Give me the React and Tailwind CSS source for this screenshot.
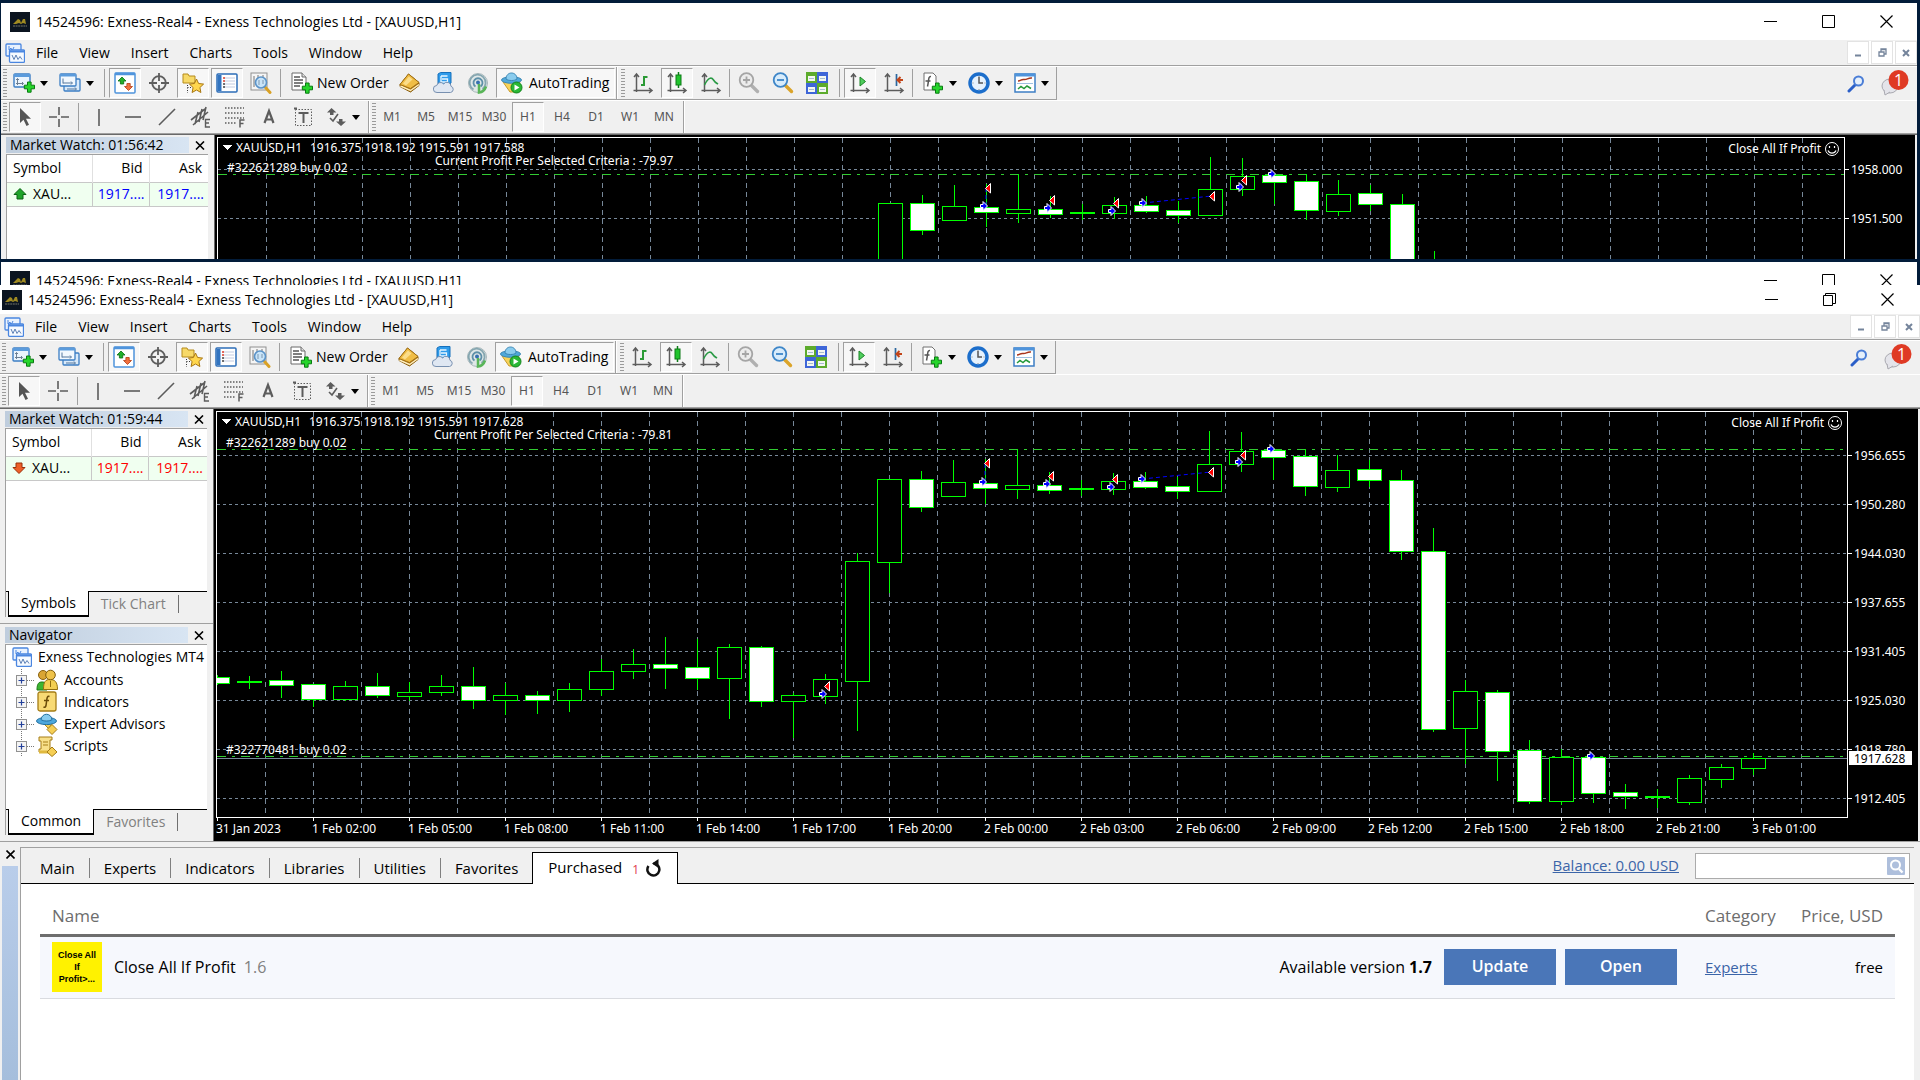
import React from "react";

const UI = "font-['Open_Sans','Noto_Sans',sans-serif]";

/* ---------- icon helpers ---------- */
function Ico({ children, size = 22 }) {
  return (
    <svg width={size} height={size} viewBox="0 0 22 22" className="shrink-0" fill="none" aria-hidden="true">
      {children}
    </svg>
  );
}
function Plus({ x = 12, y = 10 }) {
  return (
    <path
      transform={`translate(${x} ${y})`}
      d="M3.5 .5h3.600v3.200h3.400v3.600H7.100v3.400H3.5V7.300H.300V3.700h3.200z"
      fill="#25d52b"
      stroke="#087a10"
      strokeWidth="1"
    />
  );
}
const NewChartIcon = () => (
  <Ico>
    <rect x="1" y="2" width="16" height="13" rx="1" fill="#eaf4fd" stroke="#3b7dc4" strokeWidth="1.4" />
    <rect x="1" y="2" width="16" height="3" fill="#5b9bdc" />
    <path d="M4.500 13V6.500M3 8l1.500-1.500L6 8M3 11.500h7M9 10l1.500 1.500L9 13" stroke="#6c7f94" />
    <Plus x={11} y={9.500} />
  </Ico>
);
const ProfilesIcon = () => (
  <Ico>
    <rect x="5" y="7" width="16" height="12" rx="1" fill="#d9eafa" stroke="#3b7dc4" strokeWidth="1.300" />
    <rect x="1" y="2" width="16" height="12" rx="1" fill="#f2f8fe" stroke="#3b7dc4" strokeWidth="1.300" />
    <rect x="1" y="2" width="16" height="2.500" fill="#5b9bdc" />
    <path d="M4 6.500v5M4 11h9M12 9.500l1.500 1.500-1.500 1.500M8 17h9M16 15.500l1.500 1.500-1.500 1.500" stroke="#54779c" />
  </Ico>
);
const MarketWatchIcon = () => (
  <Ico>
    <rect x="1" y="1" width="20" height="20" rx="1" fill="#fff" stroke="#4f94dc" strokeWidth="1.500" />
    <path d="M1 2h20" stroke="#4f94dc" strokeWidth="2.500" />
    <path d="M8 5l4 4H9.700v3H6.400V9H4z" fill="#22b02b" stroke="#0b6e12" strokeWidth=".8" />
    <path d="M14.500 18.500l-4-4h2.400v-3h3.300v3h2.300z" fill="#f2703c" stroke="#b23a12" strokeWidth=".8" />
  </Ico>
);
const DataWindowIcon = () => (
  <Ico>
    <circle cx="11" cy="11" r="6.800" stroke="#5d5d5d" strokeWidth="1.800" />
    <path d="M11 1v8M11 13v8M1 11h8M13 11h8" stroke="#5d5d5d" strokeWidth="1.800" />
  </Ico>
);
const NavigatorIcon = () => (
  <Ico>
    <path d="M1 2h5l1 2h6v7H1z" fill="#f7d968" stroke="#b58b1d" />
    <path d="M5.500 13v8M5.500 15.500h5" stroke="#333" strokeDasharray="1 1.500" />
    <path d="M14.500 7l2.100 4.500 5 .6-3.700 3.400 1 5-4.400-2.500-4.400 2.500 1-5-3.700-3.400 5-.6z" fill="#ffd64d" stroke="#a87612" />
  </Ico>
);
const TerminalIcon = () => (
  <Ico>
    <rect x="1" y="2" width="20" height="18" rx="1" fill="#fff" stroke="#2d6db8" strokeWidth="1.500" />
    <path d="M3.500 3v16" stroke="#3274c0" strokeWidth="4" />
    <path d="M8 6h11M8 9h11M8 12h11M8 15h11" stroke="#c2cbe0" />
    <path d="M7 6h2M7 9h2" stroke="#e03e2b" strokeWidth="1.500" />
    <path d="M7 12h2M7 15h2" stroke="#444" strokeWidth="1.500" />
  </Ico>
);
const TesterIcon = () => (
  <Ico>
    <rect x="1" y="1" width="16" height="17" fill="#f5f5f5" stroke="#8f8f8f" />
    <path d="M4 4v11M8 3v4M13 3v3" stroke="#777" />
    <path d="M15.500 15.500l4.500 5" stroke="#d9a125" strokeWidth="3" strokeLinecap="round" />
    <circle cx="11" cy="10.500" r="5.500" fill="#c4e2f8" fillOpacity=".9" stroke="#5b93c8" strokeWidth="1.600" />
    <path d="M9 8v5M13 8v4" stroke="#7d97b0" />
  </Ico>
);
const OrderIcon = () => (
  <Ico>
    <path d="M1 1h10l4 4v13H1z" fill="#fff" stroke="#6b6b6b" />
    <path d="M11 1v4h4" fill="#ddd" stroke="#6b6b6b" />
    <path d="M3 5h6M3 8h9M3 11h9M3 14h6" stroke="#555" strokeWidth="1.300" />
    <Plus x={11} y={10.500} />
  </Ico>
);
const MetaEditorIcon = () => (
  <Ico>
    <path d="M1 12.500L9.500 2 20 10.500v3L11.500 20 1 14.500z" fill="#a9700f" stroke="#8a5c0c" />
    <path d="M1.500 14l10 4.500L20 12.500" stroke="#fff0c0" strokeWidth="1.500" />
    <path d="M1 12.500L9.500 2 20 10.500 11.500 16.500z" fill="#f0bd45" stroke="#9a6a10" strokeWidth=".8" />
    <path d="M4 11.500l6-7 3.500 3-6.500 6z" fill="#fbdd8a" />
  </Ico>
);
const CloudIcon = () => (
  <Ico>
    <path d="M5 2l2.500-1.500H18V11l-2.500 2H5z" fill="#2f9bea" stroke="#1670bc" />
    <path d="M8 4h6.500M8 4v6h6.500V7H9" stroke="#e8f6ff" strokeWidth="1.300" />
    <path d="M4 20.500a3.500 3.500 0 01-.3-7 4 4 0 017-1.500 4 4 0 017.300 2.300 3.200 3.200 0 01-.5 6.200z" fill="#dfe7f2" stroke="#7890b0" />
  </Ico>
);
const SignalIcon = () => (
  <Ico>
    <circle cx="11" cy="11" r="9.500" fill="#dfe7e7" stroke="#a9b8bb" />
    <path d="M6.500 17.500a8 8 0 119-.5" stroke="#85a6b0" strokeWidth="1.800" />
    <path d="M8.500 14.500a4.500 4.500 0 115 0" stroke="#5d8fa8" strokeWidth="1.800" />
    <circle cx="11" cy="10.500" r="2" fill="#3570b0" />
    <path d="M12 12v8.500c4-.5 6-3 7-6" stroke="#59b558" strokeWidth="2.500" />
  </Ico>
);
const AutoIcon = () => (
  <Ico>
    <path d="M2 10h17l-5 10H9z" fill="#f7d35a" stroke="#c79a2c" />
    <ellipse cx="10.500" cy="8" rx="10" ry="3.300" fill="#4fa8da" stroke="#3a86b4" />
    <path d="M5 7c0-8 11-8 11 0-2 2-9 2-11 0z" fill="#8accee" stroke="#3a86b4" />
    <circle cx="15.500" cy="15.500" r="5.500" fill="#2ab835" stroke="#13841c" />
    <path d="M13.500 12.500l5 3-5 3z" fill="#fff" />
  </Ico>
);
const Axes = () => (
  <path d="M4.500 20V2M2 5l2.500-3L7 5M1.500 18.500H20M17 16l3 2.500L17 21" stroke="#5c5c5c" strokeWidth="1.500" />
);
const BarsIcon = () => (
  <Ico><Axes /><path d="M12 4v10M12 5h3.500M12 13H9" stroke="#2a9a35" strokeWidth="2" /></Ico>
);
const CandlesIcon = () => (
  <Ico><Axes /><path d="M12.500 0v16" stroke="#0c7a17" strokeWidth="1.500" /><rect x="10" y="3" width="5" height="10" fill="#20c42c" stroke="#0c7a17" /></Ico>
);
const LineIcon = () => (
  <Ico><Axes /><path d="M4.500 13c4-8 7-8 9-5 1.500 2.500 3 3 4.500 4" stroke="#2a9a45" strokeWidth="1.600" /></Ico>
);
function Lens({ minus, c1, c2, handle }) {
  return (
    <Ico>
      <path d="M13.500 13.500l6 6" stroke={handle} strokeWidth="3.400" strokeLinecap="round" />
      <circle cx="8.500" cy="8" r="6.800" fill={c2} stroke={c1} strokeWidth="1.800" />
      <path d={minus ? "M5 8h7" : "M5 8h7M8.500 4.500v7"} stroke={c1} strokeWidth="1.800" />
    </Ico>
  );
}
const TileIcon = () => (
  <Ico>
    <path d="M0 0h11v11H0z" fill="#5cab2c" /><path d="M11 0h11v11H11z" fill="#3e66d8" />
    <path d="M0 11h11v11H0z" fill="#3e66d8" /><path d="M11 11h11v11H11z" fill="#5cab2c" />
    <path d="M2 4h7v5H2zM13 4h7v5h-7zM2 15h7v5H2zM13 15h7v5h-7z" fill="#f4f8f2" />
    <path d="M3 6.500h5M14 6.500h5M3 17.500h5M14 17.500h5" stroke="#a8bdd0" />
  </Ico>
);
const ScrollIcon = () => (
  <Ico><Axes /><path d="M11 5l5.500 4.500L11 14z" fill="#4fce5c" stroke="#1a8426" /></Ico>
);
const ShiftIcon = () => (
  <Ico><Axes /><path d="M13.500 2v12" stroke="#2c679f" strokeWidth="1.700" /><path d="M20 8h-5M17.500 5l-3 3 3 3" stroke="#c24418" strokeWidth="2" /></Ico>
);
const IndicatorsIcon = () => (
  <Ico>
    <path d="M2 1h9l3 3v14H2z" fill="#fff" stroke="#707070" />
    <path d="M9 4.500c-3-.5-2 4-3.500 10M3.500 9h5" stroke="#555" strokeWidth="1.500" />
    <Plus x={10} y={10.500} />
  </Ico>
);
const ClockIcon = () => (
  <Ico>
    <circle cx="11" cy="11" r="9" fill="#e6f2fd" stroke="#1c6ecb" strokeWidth="3.500" />
    <path d="M11 5v6h4" stroke="#555" strokeWidth="1.500" />
    <path d="M11 4v1M11 17v1M4.500 11h1M16.500 11h1" stroke="#888" />
  </Ico>
);
const TemplateIcon = () => (
  <Ico>
    <rect x="1" y="2" width="20" height="18" fill="#fff" stroke="#3d7ec4" strokeWidth="1.500" />
    <path d="M1 3h20" stroke="#4f94dc" strokeWidth="3" />
    <path d="M3 11.500h16" stroke="#9fc0e0" />
    <path d="M4 9c3 0 3-2 6-1.500s4-2 8-1.500" stroke="#a8351c" strokeWidth="1.500" />
    <path d="M4 17l3-2.500 3 2 3-2.500 4 2.500" stroke="#259a3a" strokeWidth="1.500" />
  </Ico>
);
const G = "#5c5c5c";
const CursorIcon = () => (
  <Ico><path d="M6 2v15l3.500-3.200 3 6.200 2.500-1.200-3-6h5z" fill="#555" /></Ico>
);
const CrossIcon = () => (
  <Ico><path d="M11 1v8M11 13v8M1 11h8M13 11h8" stroke={G} strokeWidth="1.600" /></Ico>
);
const VIcon = () => <Ico><path d="M11 3v17" stroke={G} strokeWidth="1.600" /></Ico>;
const HIcon = () => <Ico><path d="M3 11h16" stroke={G} strokeWidth="1.600" /></Ico>;
const DIcon = () => <Ico><path d="M3 19L19 3" stroke={G} strokeWidth="1.600" /></Ico>;
const ChannelIcon = () => (
  <Ico>
    <path d="M1 14L15 3M3 19L18 6M8 6L5 18M12 3L9 16M16 1l-3 13" stroke={G} strokeWidth="1.600" />
    <path d="M20 13.500h-4.500v7.500H20M15.500 17H19" stroke={G} strokeWidth="1.400" />
  </Ico>
);
const FiboIcon = () => (
  <Ico>
    <path d="M1 2h19M1 7h19M1 12h19M1 17h12" stroke={G} strokeWidth="1.300" strokeDasharray="1.500 1.500" />
    <path d="M20.500 14H16v7.500M16 17.500h3.500" stroke={G} strokeWidth="1.500" />
  </Ico>
);
const LetterA = () => (
  <Ico><path d="M6.500 17L11 5l4.500 12M8 13.500h6" stroke={G} strokeWidth="2.200" /></Ico>
);
const LabelIcon = () => (
  <Ico>
    <rect x="3.500" y="3.500" width="16" height="16" stroke={G} strokeDasharray="1.500 1.500" />
    <path d="M6.500 7h10M11.500 7v10M2 2.500h3" stroke={G} strokeWidth="2" />
  </Ico>
);
const ShapesIcon = () => (
  <Ico>
    <path d="M6.500 2l5 4.500h-3v2.500H5V6.500H2z" fill={G} />
    <path d="M16 20l-5-4.500h3V13h3.500v2.500H21z" fill={G} />
    <path d="M5 12l3 3 5-7" stroke={G} strokeWidth="1.600" />
  </Ico>
);
const Caret = () => (
  <svg width="8" height="5" viewBox="0 0 8 5" aria-hidden="true"><path d="M0 0h8L4 5z" fill="#000" /></svg>
);

function AppLogo() {
  return (
    <svg width="20" height="20" viewBox="0 0 20 20" className="shrink-0" aria-hidden="true">
      <rect width="20" height="20" fill="#0b1420" />
      <path d="M3 12l5-5 2 1 1 3 2-4h2l1 5-3-1-2 1-2-1-3 1z" fill="#a08a22" />
      <path d="M3 14h14" stroke="#77776a" strokeDasharray="2 .6" />
    </svg>
  );
}
function Mt4Icon({ size = 20 }) {
  return (
    <svg width={size} height={size} viewBox="0 0 20 20" className="shrink-0" fill="none" aria-hidden="true">
      <rect x="1" y="1" width="15" height="12" rx="1" fill="#e9f2fe" stroke="#4a86e0" strokeWidth="1.300" />
      <path d="M4 3v4l2-2 1 3 2-4" stroke="#4a86e0" />
      <rect x="4.500" y="7" width="15" height="12.300" rx="1" fill="#f6faff" stroke="#4a86e0" strokeWidth="1.300" />
      <path d="M4.500 8.500h15" stroke="#4a86e0" strokeWidth="2" />
      <path d="M7 12l2 4.500 2-4.500 2 4.500 2-3 2 3" stroke="#5c7fb4" />
    </svg>
  );
}

/* ---------- toolbar parts ---------- */
const pressedCls =
  "border-l border-t border-l-[#a0a0a0] border-t-[#a0a0a0] border-r border-b border-r-white border-b-white bg-[#f7f7f7]";

function Tool({ label, on, children }) {
  return (
    <button
      type="button"
      aria-label={label}
      className={"mr-0.5 flex h-[30px] w-8 items-center justify-center " + (on ? pressedCls : "")}
    >
      {children}
    </button>
  );
}
function DropTool({ label, children }) {
  return (
    <button type="button" aria-label={label} className="flex h-[30px] w-[46px] items-center gap-[5px] pl-1">
      {children}
      <Caret />
    </button>
  );
}
const Grip = ({ cls = "mx-0.5" }) => (
  <span className={"h-7 w-1 bg-[repeating-linear-gradient(180deg,#9a9a9a_0_1px,transparent_1px_3px)] " + cls} />
);
const Sep = ({ cls }) => <span className={"h-7 w-px bg-[#a0a0a0] " + cls} />;
const EndLine = () => <span className="mx-px h-8 w-0.5 border-r border-l border-l-[#a0a0a0] border-r-white" />;

function ToolbarMain() {
  return (
    <div className="flex">
      <div className="flex h-[33px] shrink-0 items-center border-r border-b border-[#a0a0a0]">
        <Grip />
        <DropTool label="New chart"><NewChartIcon /></DropTool>
        <DropTool label="Profiles"><ProfilesIcon /></DropTool>
        <Sep cls="ml-[3px] mr-1" />
        <Tool label="Market Watch" on><MarketWatchIcon /></Tool>
        <Tool label="Data Window"><DataWindowIcon /></Tool>
        <Tool label="Navigator" on><NavigatorIcon /></Tool>
        <Tool label="Terminal" on><TerminalIcon /></Tool>
        <Tool label="Strategy Tester"><TesterIcon /></Tool>
        <Sep cls="ml-px mr-1.5" />
        <button type="button" className="mr-[3px] flex h-[30px] w-[104px] items-center gap-1 pl-1 text-sm whitespace-nowrap">
          <OrderIcon />New Order
        </button>
        <Tool label="MetaEditor"><MetaEditorIcon /></Tool>
        <Tool label="Cloud"><CloudIcon /></Tool>
        <Tool label="Signals"><SignalIcon /></Tool>
        <button type="button" className={"flex h-[30px] w-[119px] items-center gap-1.5 pl-1 text-sm whitespace-nowrap " + pressedCls}>
          <AutoIcon />AutoTrading
        </button>
        <EndLine />
        <Grip />
        <Tool label="Bar chart"><BarsIcon /></Tool>
        <Tool label="Candlesticks" on><CandlesIcon /></Tool>
        <Tool label="Line chart"><LineIcon /></Tool>
        <Sep cls="mr-[3px]" />
        <Tool label="Zoom in"><Lens c1="#a5a5a5" c2="#ececec" handle="#b0b0b0" /></Tool>
        <Tool label="Zoom out"><Lens minus c1="#3e86c8" c2="#d8ecfb" handle="#dba42a" /></Tool>
        <Tool label="Tile windows"><TileIcon /></Tool>
        <Sep cls="mx-1" />
        <Tool label="Auto scroll" on><ScrollIcon /></Tool>
        <Tool label="Chart shift"><ShiftIcon /></Tool>
        <Sep cls="mr-[5px]" />
        <DropTool label="Indicators"><IndicatorsIcon /></DropTool>
        <DropTool label="Periods"><ClockIcon /></DropTool>
        <DropTool label="Templates"><TemplateIcon /></DropTool>
      </div>
      <div className="flex h-[33px] flex-1 items-start justify-end gap-4 pt-0.5 pr-2">
        <button type="button" aria-label="Search" className="mt-1.5">
          <svg width="18" height="18" viewBox="0 0 18 18" fill="none">
            <path d="M8 10l-6 6" stroke="#2b5fc8" strokeWidth="3" strokeLinecap="round" />
            <circle cx="11.500" cy="6" r="4.500" fill="#e6f0fb" stroke="#4a7dd6" strokeWidth="2" />
          </svg>
        </button>
        <button type="button" aria-label="1 new message" className="relative h-7 w-7">
          <svg width="28" height="28" viewBox="0 0 28 28" fill="none" className="absolute inset-0">
            <ellipse cx="9" cy="17" rx="8" ry="7" fill="#e4e4ea" stroke="#a9a9b0" />
            <path d="M3 21l1 5 5-3" fill="#e4e4ea" stroke="#a9a9b0" />
            <circle cx="17.500" cy="11" r="10" fill="#df3a24" />
          </svg>
          <span className="absolute top-px right-0 w-[21px] text-center text-base leading-5 text-white">1</span>
        </button>
      </div>
    </div>
  );
}

function ToolbarLines() {
  return (
    <div className="flex h-[33px] items-center border-t border-white">
      <Grip />
      <Tool label="Cursor" on><CursorIcon /></Tool>
      <Tool label="Crosshair"><CrossIcon /></Tool>
      <Sep cls="ml-px mr-1" />
      <Tool label="Vertical line"><VIcon /></Tool>
      <Tool label="Horizontal line"><HIcon /></Tool>
      <Tool label="Trendline"><DIcon /></Tool>
      <Tool label="Equidistant channel"><ChannelIcon /></Tool>
      <Tool label="Fibonacci retracement"><FiboIcon /></Tool>
      <Tool label="Text"><LetterA /></Tool>
      <Tool label="Text label"><LabelIcon /></Tool>
      <DropTool label="Arrows"><ShapesIcon /></DropTool>
      <EndLine />
      <Grip cls="ml-px" />
      {["M1", "M5", "M15", "M30", "H1", "H4", "D1", "W1", "MN"].map((t) => (
        <button
          key={t}
          type="button"
          className={
            "mr-0.5 flex h-[30px] w-8 items-center justify-center font-['Noto_Sans',sans-serif] text-xs text-[#555] " +
            (t === "H1" ? pressedCls : "")
          }
        >
          {t}
        </button>
      ))}
      <EndLine />
    </div>
  );
}

/* ---------- window chrome ---------- */
function TitleBar({ restored, cls }) {
  const btn = "flex h-7 w-[58px] items-center justify-center";
  return (
    <div className={"flex items-center bg-white " + cls}>
      <AppLogo />
      <h1 className="ml-1.5 flex-1 text-sm leading-6 whitespace-nowrap">
        14524596: Exness-Real4 - Exness Technologies Ltd - [XAUUSD,H1]
      </h1>
      <button type="button" aria-label="Minimize" className={btn}>
        <svg width="13" height="13"><path d="M0 6.500h13" stroke="#000" strokeWidth="1" /></svg>
      </button>
      <button type="button" aria-label="Maximize" className={btn}>
        <svg width="13" height="13" fill="none" stroke="#000">
          {restored ? <path d="M.5 2.500h9v10h-9zM2.500 2.500v-2h10v10h-3" /> : <path d="M.5.500h12v12H.5z" />}
        </svg>
      </button>
      <button type="button" aria-label="Close" className={btn}>
        <svg width="13" height="13" stroke="#000" strokeWidth="1.200"><path d="M.5.500l12 12M12.500.500l-12 12" /></svg>
      </button>
    </div>
  );
}

function MenuBar() {
  const mdi = "flex h-[23px] w-[22px] items-center justify-center border border-[#e3e3e3] bg-white";
  return (
    <div className="flex h-[26px] items-center border-b border-[#a0a0a0]">
      <nav className="flex items-center gap-px pl-1">
        <Mt4Icon />
        {["File", "View", "Insert", "Charts", "Tools", "Window", "Help"].map((m) => (
          <button key={m} type="button" className="px-[10px] text-sm leading-6">{m}</button>
        ))}
      </nav>
      <div className="ml-auto flex gap-0.5 bg-white">
        <button type="button" aria-label="Minimize chart" className={mdi}>
          <svg width="8" height="8"><path d="M1 6.500h6" stroke="#74849b" strokeWidth="2" /></svg>
        </button>
        <button type="button" aria-label="Restore chart" className={mdi}>
          <svg width="9" height="9" fill="none" stroke="#74849b" strokeWidth="1.300"><path d="M1 4h5v4H1zM3 3.500V1h5v5H6.500M3 1.500h5" /></svg>
        </button>
        <button type="button" aria-label="Close chart" className={mdi}>
          <svg width="8" height="8" stroke="#74849b" strokeWidth="2"><path d="M1 1l6 6M7 1L1 7" /></svg>
        </button>
      </div>
    </div>
  );
}

function WindowTop() {
  return (
    <div className="bg-[#f0f0f0]">
      <MenuBar />
      <div className="border-t border-white"><ToolbarMain /></div>
      <ToolbarLines />
      <div className="h-0.5 border-t border-[#a0a0a0] bg-[#696969]" />
    </div>
  );
}

/* ---------- side panels ---------- */
function PanelHead({ title }) {
  return (
    <div className="flex h-4 items-center">
      <h2 className="h-4 w-[183px] bg-linear-to-r from-[#bfcddd] to-[#d8e5f3] pl-1 text-sm leading-4 whitespace-nowrap">{title}</h2>
      <button type="button" aria-label={"Close " + title} className="ml-[5px] p-px">
        <svg width="10" height="9" stroke="#000" strokeWidth="1.600"><path d="M1 .5l8 8M9 .5l-8 8" /></svg>
      </button>
    </div>
  );
}

function PanelTabs({ active, other }) {
  return (
    <div className="flex h-[26px] shrink-0 bg-[#f0f0f0] text-sm text-[#808080]">
      <span className="w-0.5 border-t border-black" />
      <button type="button" className="border-x border-b-2 border-black bg-white px-3 leading-6 text-black">{active}</button>
      <div className="flex flex-1 items-center border-t border-black pb-0.5">
        <button type="button" className="px-3 leading-6 whitespace-nowrap">{other}</button>
        <span className="h-[18px] w-px bg-[#707070]" />
      </div>
    </div>
  );
}

function MarketWatch({ time, up }) {
  const tone = up ? "text-[#0000ff]" : "text-[#ff0000]";
  return (
    <>
      <PanelHead title={"Market Watch: " + time} />
      <div className="mt-px flex w-[202px] flex-1 flex-col overflow-hidden border-t border-l border-[#a0a0a0] bg-white">
        <table className="w-full table-fixed border-collapse text-sm">
          <thead>
            <tr className="h-[27px] border-b border-[#c8c8c8]">
              <th className="w-[85px] border-r border-[#e0e0e0] pl-1.5 text-left font-normal">Symbol</th>
              <th className="w-[57px] border-r border-[#e0e0e0] pr-1.5 text-right font-normal">Bid</th>
              <th className="pr-1.5 text-right font-normal">Ask</th>
            </tr>
          </thead>
          <tbody>
            <tr className="h-6 border-b border-[#c8c8c8] bg-[#f0fff0]">
              <td className="border-r border-[#c8c8c8] pl-1.5">
                <span className="flex items-center gap-1.5 leading-5">
                  <svg width="14" height="12" viewBox="0 0 14 12" aria-hidden="true">
                    {up ? (
                      <path d="M7 .5l6 6h-3V11H4V6.500H1z" fill="#1fa42a" stroke="#0b6212" />
                    ) : (
                      <path d="M7 11.500l6-6h-3V1H4v4.500H1z" fill="#ee5f28" stroke="#9a300b" />
                    )}
                  </svg>
                  XAU...
                </span>
              </td>
              <td className={"border-r border-[#c8c8c8] pr-1 text-right leading-5 " + tone}>1917....</td>
              <td className={"pr-1 text-right leading-5 " + tone}>1917....</td>
            </tr>
          </tbody>
        </table>
      </div>
    </>
  );
}

const AccountsIcon = () => (
  <Ico>
    <path d="M1 21c0-7 2-8 5-8s5 1 5 8z" fill="#3cb531" stroke="#1d7a16" />
    <circle cx="7" cy="6" r="4.500" fill="#d9a534" stroke="#8a6210" />
    <path d="M7.500 20.500c0-8 2-10 6.500-10s7.500 2 7.500 10z" fill="#f3cf52" stroke="#93700f" />
    <circle cx="14.500" cy="6" r="4.800" fill="#eec24a" stroke="#7d5a0c" />
    <path d="M14.500 12v6" stroke="#93700f" />
  </Ico>
);
const FxIcon = () => (
  <Ico>
    <rect x="2" y="1" width="18" height="19" rx="2" fill="#f8da74" stroke="#a57d16" strokeWidth="1.300" />
    <path d="M13.500 5.500c-3-1-2.500 3-3.500 9-.3 1.500-1 2-2.500 1.500M8 9.500h5" stroke="#6b4c08" strokeWidth="1.500" />
  </Ico>
);
const ExpertIcon = () => (
  <Ico>
    <path d="M6 9l10 1-3 6z" fill="#f2cf5b" stroke="#b78a1c" />
    <ellipse cx="10.500" cy="8" rx="10" ry="3.600" fill="#4da7dc" stroke="#22709f" />
    <path d="M5 6.500c1-7 10-7 11 0-2 2-9 2-11 0z" fill="#86cbef" stroke="#22709f" />
    <path d="M16 11.500l5 5-5 5-5-5z" fill="#f6cf55" stroke="#a57d16" />
  </Ico>
);
const ScriptIcon = () => (
  <Ico>
    <path d="M3 2h13v3h-2v12H3v-3h2V6H3z" fill="#f8e08a" stroke="#a57d16" />
    <path d="M7 7h5M7 10h5" stroke="#a57d16" />
    <path d="M3 17h13" stroke="#e0b93e" strokeWidth="3" />
    <path d="M16 12l5 5-5 4.500-5-4.500z" fill="#f6cf55" stroke="#a57d16" />
  </Ico>
);

function Navigator() {
  const rows = [
    ["Accounts", AccountsIcon],
    ["Indicators", FxIcon],
    ["Expert Advisors", ExpertIcon],
    ["Scripts", ScriptIcon],
  ];
  return (
    <>
      <PanelHead title="Navigator" />
      <div className="mt-px flex w-[202px] flex-1 flex-col border-t border-l border-[#a0a0a0] bg-white text-sm">
        <div className="flex h-[24px] items-center gap-1.5 pl-1.5 whitespace-nowrap">
          <Mt4Icon />
          <span>Exness Technologies MT4</span>
        </div>
        <ul>
          {rows.map(([name, Icon]) => (
            <li key={name} className="flex h-[22px] items-center pl-[10px]">
              <button type="button" aria-label={"Expand " + name} className="flex">
                <svg width="11" height="22" viewBox="0 0 11 22" fill="none">
                  <path d="M5.500 0v22" stroke="#777" strokeDasharray="1 1" />
                  <rect x=".5" y="6.500" width="10" height="10" fill="#f4f4f4" stroke="#919191" />
                  <path d="M5.500 8.500v6M2.500 11.500h6" stroke="#23409a" strokeWidth="1.200" />
                </svg>
              </button>
              <span className="mr-0.5 w-[7px] border-t border-dotted border-[#777]" />
              <Icon />
              <span className="ml-1.5 leading-5">{name}</span>
            </li>
          ))}
        </ul>
        <div className="mt-auto"><PanelTabs active="Common" other="Favorites" /></div>
      </div>
    </>
  );
}

/* ---------- chart ---------- */
/* [filled, bodyTop, bodyBottom, wickTop, wickBottom], one candle each 32px */
const CANDLES = [
  [1, 677, 683, 675, 684], [1, 681, 682, 676, 688], [1, 680, 685, 671, 697], [1, 684, 699, 684, 706],
  [0, 686, 699, 681, 700], [1, 686, 695, 673, 697], [0, 692, 696, 682, 700], [0, 686, 692, 675, 695],
  [1, 686, 700, 667, 708], [0, 695, 700, 683, 714], [1, 695, 700, 691, 713], [0, 689, 700, 683, 711],
  [0, 671, 689, 659, 695], [0, 664, 671, 649, 678], [1, 664, 668, 637, 688], [1, 667, 678, 639, 689],
  [0, 647, 678, 644, 718], [1, 647, 701, 646, 706], [0, 695, 701, 693, 737], [0, 679, 696, 674, 703],
  [0, 561, 681, 553, 730], [0, 479, 562, 479, 592], [1, 479, 507, 471, 511], [0, 482, 496, 460, 496],
  [1, 483, 488, 459, 503], [0, 485, 489, 449, 498], [1, 485, 490, 472, 493], [1, 488, 489, 480, 495],
  [0, 481, 489, 473, 494], [1, 481, 487, 472, 488], [1, 486, 491, 477, 498], [0, 464, 491, 431, 491],
  [0, 451, 464, 432, 471], [1, 450, 457, 449, 479], [1, 456, 486, 449, 495], [0, 470, 487, 455, 491],
  [1, 469, 480, 460, 486], [1, 480, 551, 470, 559], [1, 551, 729, 528, 731], [0, 691, 728, 680, 763],
  [1, 692, 751, 690, 780], [1, 750, 801, 740, 803], [0, 757, 801, 749, 804], [1, 757, 793, 757, 802],
  [1, 792, 796, 784, 808], [1, 796, 797, 789, 807], [0, 778, 802, 775, 804], [0, 767, 779, 764, 787],
  [0, 758, 768, 753, 774],
];
const BUYS = [[606, 694], [766, 482], [830, 484], [894, 487], [925, 479], [1022, 462], [1054, 449], [1374, 756]];
const SELLS = [[610, 686], [770, 463], [834, 476], [898, 479], [994, 472], [1026, 455]];
const TRADES = [[606, 694, 610, 686], [768, 482, 768, 463], [830, 484, 834, 476], [894, 487, 898, 479], [925, 479, 994, 472], [1022, 462, 1026, 455]];
const TIMES = [
  "31 Jan 2023", "1 Feb 02:00", "1 Feb 05:00", "1 Feb 08:00", "1 Feb 11:00", "1 Feb 14:00", "1 Feb 17:00", "1 Feb 20:00",
  "2 Feb 00:00", "2 Feb 03:00", "2 Feb 06:00", "2 Feb 09:00", "2 Feb 12:00", "2 Feb 15:00", "2 Feb 18:00", "2 Feb 21:00", "3 Feb 01:00",
];
const chartText = "font-['Noto_Sans',sans-serif] text-xs";

function Chart({ scale, orderY, gridY, prices, current, last, profit, secondOrder, full }) {
  const y = (v) => Math.round(orderY + (v - 449) * scale);
  const cols = Array.from({ length: 34 }, (_, i) => 48 * (i + 1));
  return (
    <div className="flex min-w-0 flex-1 flex-col overflow-hidden bg-black pt-0.5 pl-0.5">
      <div className="flex min-h-0 flex-1">
        <div className={"min-w-0 flex-1 border-t border-r border-l border-white " + (full ? "border-b" : "")}>
          <svg className="block h-full w-full" shapeRendering="crispEdges" role="img" aria-label="XAUUSD hourly candlestick chart">
            <g stroke="#778899" strokeWidth="1">
              {cols.map((x) => (
                <line key={x} x1={x + 0.5} x2={x + 0.5} y1="0" y2="100%" strokeDasharray="5 4" />
              ))}
              {gridY.map((g) => (
                <line key={g} x1="0" x2="100%" y1={g + 0.5} y2={g + 0.5} strokeDasharray="3 3" />
              ))}
              {current ? <line x1="0" x2="100%" y1={current + 0.5} y2={current + 0.5} /> : null}
            </g>
            <g stroke="#32cd32" strokeDasharray="9 6 3 6">
              <line x1="0" x2="100%" y1={orderY + 0.5} y2={orderY + 0.5} />
              {secondOrder ? <line x1="0" x2="100%" y1={secondOrder + 0.5} y2={secondOrder + 0.5} /> : null}
            </g>
            <g stroke="#00ff00" strokeWidth="1">
              {CANDLES.map(([filled, bt, bb, wt, wb], i) => {
                const x = i * 32;
                return (
                  <g key={i}>
                    <line x1={x + 0.5} x2={x + 0.5} y1={y(wt)} y2={y(wb) + 1} />
                    <rect x={x - 11.5} y={y(bt) + 0.5} width="24" height={Math.max(1, y(bb) - y(bt))} fill={filled ? "#fff" : "#000"} />
                  </g>
                );
              })}
            </g>
            <g stroke="#0000ff" strokeDasharray="4 3" shapeRendering="auto">
              {TRADES.map(([a, b, c, d]) => (
                <line key={a} x1={a} y1={y(b)} x2={c} y2={y(d)} />
              ))}
            </g>
            <g shapeRendering="auto">
              {BUYS.map(([a, b]) => (
                <path key={a} transform={`translate(${a} ${y(b)})`} d="M-3.500-1.500h2.500v-3l4.500 4.500-4.500 4.500v-3h-2.500z" fill="#0000ff" stroke="#fff" />
              ))}
              {SELLS.map(([a, b]) => (
                <path key={a} transform={`translate(${a} ${y(b)})`} d="M-2.500.500L2.500-4.500v9.500z" fill="#ff0000" stroke="#fff" />
              ))}
            </g>
            <g className={chartText} fill="#fff">
              <path d="M4 7h10l-5 5z" />
              <text x="18" y="14">XAUUSD,H1</text>
              <text x="92" y="14">{"1916.375 1918.192 1915.591 " + last}</text>
              <text x="217" y="27">{"Current Profit Per Selected Criteria : " + profit}</text>
              <text x="9" y={orderY - 2}>#322621289 buy 0.02</text>
              {secondOrder ? <text x="9" y={secondOrder - 2}>#322770481 buy 0.02</text> : null}
            </g>
            <svg x="100%" overflow="visible" shapeRendering="auto">
              <text x="-23" y="15" textAnchor="end" fill="#fff" className={chartText}>Close All If Profit</text>
              <circle cx="-12" cy="11" r="6.500" fill="none" stroke="#fff" />
              <path d="M-14.500 8v2M-9.500 8v2M-16 12.500c1.500 3.500 6.500 3.500 8 0" fill="none" stroke="#fff" strokeWidth="1.200" />
            </svg>
          </svg>
        </div>
        <svg className="block h-full w-[70px] shrink-0" fill="#fff">
          {prices.map(([v, py]) => (
            <g key={v}>
              <path d={`M0 ${py + 1.500}h4`} stroke="#fff" />
              <text x="6" y={py + 6} className={chartText}>{v}</text>
            </g>
          ))}
          {current ? (
            <g>
              <rect x="1" y={current - 6} width="63" height="14" />
              <text x="6" y={current + 6} fill="#000" className={chartText}>{last}</text>
            </g>
          ) : null}
        </svg>
      </div>
      {full ? (
        <svg className="block h-[23px] w-full shrink-0">
          {TIMES.map((t, i) => (
            <g key={t}>
              <path d={`M${i * 96 + 1.500} 0v3`} stroke="#fff" />
              <text x={i * 96} y="15" fill="#fff" className={chartText}>{t}</text>
            </g>
          ))}
        </svg>
      ) : null}
    </div>
  );
}

/* ---------- market terminal ---------- */
function Market() {
  const tabs = ["Main", "Experts", "Indicators", "Libraries", "Utilities", "Favorites"];
  const action = "h-9 w-28 bg-[#4a76b8] pb-0.5 text-base font-semibold text-white";
  return (
    <section className="flex flex-1 border-t border-[#a0a0a0] bg-[#f0f0f0] pr-1.5">
      <div className="flex w-5 shrink-0 flex-col items-center pt-2">
        <button type="button" aria-label="Close terminal" className="mb-[7px]">
          <svg width="9" height="9" stroke="#000" strokeWidth="1.600"><path d="M.5.500l8 8M8.500.500l-8 8" /></svg>
        </button>
        <div className="w-4 flex-1 bg-linear-to-b from-[#b9cdea] to-[#a5bedc]" />
      </div>
      <div className="mt-[5px] flex min-w-0 flex-1 flex-col border-t border-l border-[#a0a0a0] bg-white">
        <div className="flex h-9 items-stretch bg-[#f0f0f0] text-[15px]">
          <div className="flex items-center border-b border-black pt-1 pl-[5px]">
            {tabs.map((t, i) => (
              <button
                key={t}
                type="button"
                className={"h-5 px-[14px] leading-5 whitespace-nowrap " + (i < 5 ? "border-r border-[#808080]" : "")}
              >
                {t}
              </button>
            ))}
          </div>
          <button type="button" className="mt-1 flex items-center border-x border-t border-black bg-white px-[15px] pb-0.5 whitespace-nowrap">
            Purchased
            <span className="mt-1 ml-2.5 text-xs text-[#e0404c]">1</span>
            <svg width="17" height="18" viewBox="0 0 17 18" fill="none" className="ml-1.5">
              <path d="M3.500 7A6 6 0 108.500 4.500H12" stroke="#111" strokeWidth="2.500" />
              <path d="M7 4.500L13.500 0v9z" fill="#111" />
            </svg>
          </button>
          <div className="flex flex-1 items-center justify-end gap-4 border-b border-black pr-1">
            <a href="#balance" className="text-[15px] text-[#3c65a8] underline">Balance: 0.00 USD</a>
            <label className="flex h-[26px] w-[215px] items-center border border-[#ababab] bg-white pr-1">
              <input type="text" aria-label="Search" className="h-full min-w-0 flex-1 px-1 outline-none" />
              <svg width="18" height="18" viewBox="0 0 18 18" fill="none">
                <rect width="18" height="18" rx="1" fill="#aebfdc" />
                <circle cx="8.500" cy="8" r="4.500" stroke="#fff" strokeWidth="2" />
                <path d="M12 12l3.500 3.500" stroke="#fff" strokeWidth="2.400" />
              </svg>
            </label>
          </div>
        </div>
        <div className="px-[19px]">
          <table className="w-full border-collapse">
            <thead>
              <tr className="h-[51px] border-b-3 border-[#6d6d6d] text-[17px] text-[#6d6d6d]">
                <th className="pt-3.5 pl-3 text-left font-normal">Name</th>
                <th aria-label="Actions" />
                <th className="w-[96px] pt-3.5 text-left font-normal">Category</th>
                <th className="w-[94px] pt-3.5 pr-3 text-right font-normal whitespace-nowrap">Price, USD</th>
              </tr>
            </thead>
            <tbody>
              <tr className="h-[63px] border-b border-[#d9dbe0] bg-[#f6f8fd] text-[15px]">
                <td className="pl-3">
                  <div className="flex items-center text-base">
                    <div className="flex h-[50px] w-[50px] flex-col items-center justify-center bg-[#fff200] font-['Liberation_Sans',sans-serif] text-[9px] leading-[12px] font-bold whitespace-nowrap">
                      <span>Close All</span>
                      <span>If</span>
                      <span>Profit&gt;...</span>
                    </div>
                    <span className="ml-3">Close All If Profit</span>
                    <span className="ml-2 text-[#808080]">1.6</span>
                  </div>
                </td>
                <td className="pr-7">
                  <div className="flex items-center justify-end">
                    <span className="mr-3 text-base">Available version <b>1.7</b></span>
                    <button type="button" className={action}>Update</button>
                    <button type="button" className={"ml-[9px] " + action}>Open</button>
                  </div>
                </td>
                <td><a href="#experts" className="text-[#3c65a8] underline">Experts</a></td>
                <td className="pr-3 text-right">free</td>
              </tr>
            </tbody>
          </table>
        </div>
      </div>
    </section>
  );
}

/* ---------- page ---------- */
export default function App() {
  return (
    <main className={"flex min-h-screen flex-col bg-white text-black " + UI}>
      <section className="flex h-[262px] flex-col overflow-hidden border-t-3 border-r-3 border-b-3 border-l border-[#021c3a]">
        <TitleBar cls="h-[37px] shrink-0 pr-0.5 pl-[9px]" />
        <WindowTop />
        <div className="flex min-h-0 flex-1 bg-[#f0f0f0] pr-0.5">
          <aside className="flex w-[214px] shrink-0 flex-col border-r border-[#696969] pt-0.5 pl-[5px]">
            <MarketWatch time="01:56:42" up />
          </aside>
          <Chart
            scale={0.97}
            orderY={36}
            gridY={[31, 80]}
            prices={[["1958.000", 31], ["1951.500", 80]]}
            last="1917.588"
            profit="-79.97"
          />
        </div>
      </section>

      <section className="h-[23px] overflow-hidden border-r-3 border-l border-[#021c3a]">
        <TitleBar cls="h-[37px] pr-0.5 pl-[9px]" />
      </section>

      <section className="flex shrink-0 flex-col">
        <TitleBar restored cls="h-[29px] pr-1 pl-0.5" />
        <WindowTop />
        <div className="flex h-[432px] bg-[#f0f0f0] pr-0.5">
          <aside className="flex w-[214px] shrink-0 flex-col border-r border-[#696969]">
            <div className="flex h-[214px] flex-col pt-0.5 pb-1.5 pl-[5px]">
              <MarketWatch time="01:59:44" />
              <div className="w-[202px] border-l border-[#a0a0a0]"><PanelTabs active="Symbols" other="Tick Chart" /></div>
            </div>
            <div className="flex flex-1 flex-col border-t border-[#a0a0a0] pt-[3px] pb-1.5 pl-[5px]">
              <Navigator />
            </div>
          </aside>
          <Chart
            full
            scale={1}
            orderY={37}
            secondOrder={344}
            current={346}
            gridY={[43, 92, 141, 190, 239, 288, 337, 386]}
            prices={[
              ["1956.655", 43], ["1950.280", 92], ["1944.030", 141], ["1937.655", 190],
              ["1931.405", 239], ["1925.030", 288], ["1918.780", 337], ["1912.405", 386],
            ]}
            last="1917.628"
            profit="-79.81"
          />
        </div>
      </section>
      <Market />
    </main>
  );
}
